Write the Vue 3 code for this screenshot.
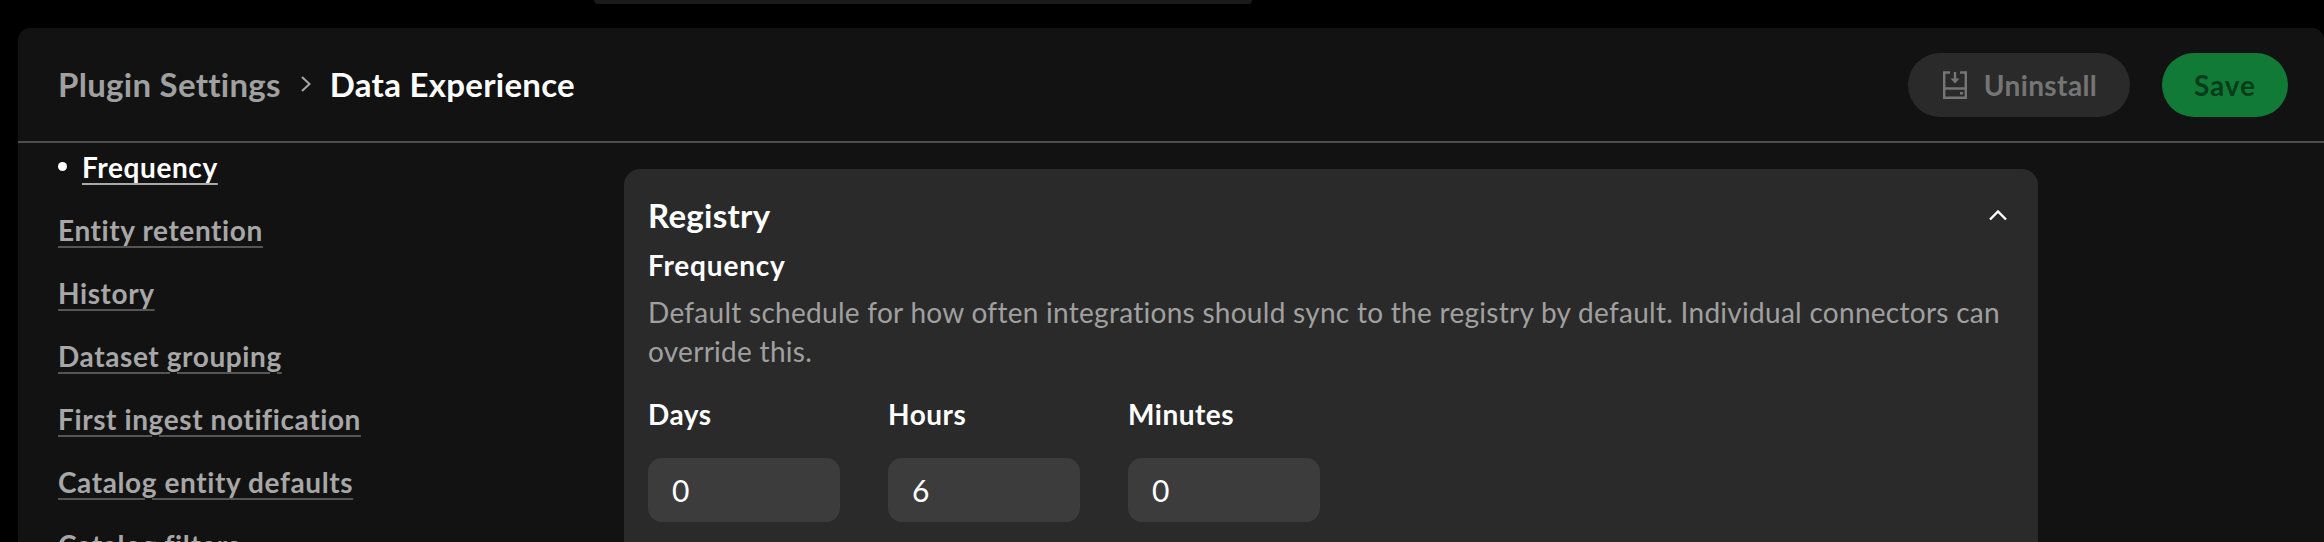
<script setup>
const navItems = [
  'Entity retention',
  'History',
  'Dataset grouping',
  'First ingest notification',
  'Catalog entity defaults',
  'Catalog filters'
]

const fields = [
  { label: 'Days', value: '0' },
  { label: 'Hours', value: '6' },
  { label: 'Minutes', value: '0' }
]
</script>

<template>
  <div class="page">
    <div class="top-strip">
      <div class="top-pill"></div>
    </div>

    <div class="panel">
      <header class="panel-head">
        <div class="crumbs">
          <span class="crumb-parent">Plugin Settings</span>
          <svg class="crumb-sep" width="14" height="20" viewBox="0 0 14 20" fill="none">
            <path d="M3 3l7.5 7L3 17" stroke="#a7a7a7" stroke-width="2" />
          </svg>
          <span class="crumb-current">Data Experience</span>
        </div>
        <div class="actions">
          <button class="btn btn-uninstall">
            <svg width="24" height="28" viewBox="0 0 24 28" fill="none" stroke="#757575" stroke-width="2.4">
              <path d="M7 1.5H1.2v25.3h21.6V1.5H17" />
              <path d="M1.2 17.5h21.6" />
              <path d="M12 1v9" />
              <path d="M7.5 7.5h9L12 12.5z" fill="#757575" stroke="none" />
              <path d="M17 22.2h3" />
            </svg>
            <span>Uninstall</span>
          </button>
          <button class="btn btn-save">Save</button>
        </div>
      </header>

      <div class="panel-body">
        <nav class="side-nav">
          <div class="nav-current">
            <span class="dot"></span>
            <a class="nav-link nav-link-active">Frequency</a>
          </div>
          <a v-for="item in navItems" :key="item" class="nav-link">{{ item }}</a>
        </nav>

        <section class="card">
          <div class="card-head">
            <h2>Registry</h2>
            <svg width="20" height="12" viewBox="0 0 20 12" fill="none">
              <path d="M2 10.5l8-8 8 8" stroke="#fff" stroke-width="2.4" />
            </svg>
          </div>
          <h3>Frequency</h3>
          <p class="desc">
            Default schedule for how often integrations should sync to the registry by default. Individual connectors can override this.
          </p>
          <div class="fields">
            <label v-for="field in fields" :key="field.label" class="field">
              <span class="field-label">{{ field.label }}</span>
              <span class="field-input">{{ field.value }}</span>
            </label>
          </div>
        </section>
      </div>
    </div>
  </div>
</template>

<style>
html,
body {
  margin: 0;
  background: #000;
  overflow: hidden;
}
</style>

<style scoped>
.page {
  height: 542px;
  overflow: hidden;
  background: #000;
  font-family: Lato, "Liberation Sans", sans-serif;
}
.top-strip {
  height: 28px;
  display: flex;
  padding-left: 594px;
}
.top-pill {
  width: 658px;
  height: 4px;
  background: #1b1b1b;
  border-radius: 0 0 16px 16px;
}
.panel {
  margin-left: 18px;
  height: 514px;
  background: #121212;
  border-radius: 12px 12px 0 0;
  overflow: hidden;
}
.panel-head {
  height: 113px;
  border-bottom: 2px solid #4d4d4d;
  display: flex;
  align-items: center;
  justify-content: space-between;
  padding: 0 36px 0 40px;
}
.crumbs {
  display: flex;
  align-items: center;
  padding-bottom: 2px;
  font-size: 33px;
  font-weight: 700;
  letter-spacing: 0.28px;
}
.crumb-parent {
  color: #a0a0a0;
}
.crumb-sep {
  margin: 0 17px 0 18px;
}
.crumb-current {
  color: #fff;
}
.actions {
  display: flex;
  gap: 32px;
  padding-top: 1px;
}
.btn {
  height: 64px;
  border: none;
  border-radius: 32px;
  font-family: inherit;
  font-size: 28px;
  font-weight: 700;
  letter-spacing: 0.4px;
  display: flex;
  align-items: center;
}
.btn-uninstall {
  width: 222px;
  justify-content: center;
  gap: 17px;
  padding: 0 0 0 2px;
  background: #2a2a2a;
  color: #757575;
}
.btn-save {
  width: 126px;
  justify-content: center;
  letter-spacing: 0.9px;
  background: #127a37;
  color: #083d1b;
}
.panel-body {
  display: flex;
}
.side-nav {
  width: 566px;
  padding: 6.5px 0 0 40px;
  display: flex;
  flex-direction: column;
  align-items: flex-start;
  gap: 29px;
}
.nav-current {
  display: flex;
  align-items: center;
  gap: 15px;
}
.dot {
  width: 9px;
  height: 9px;
  border-radius: 50%;
  background: #fff;
}
.nav-link {
  font-size: 28px;
  line-height: 34px;
  font-weight: 700;
  letter-spacing: 0.6px;
  color: #a7a7a7;
  text-decoration: underline;
  text-decoration-color: #555;
  text-decoration-thickness: 2px;
  text-underline-offset: 5px;
}
.nav-link-active {
  color: #fff;
  text-decoration-color: #aaa;
}
.card {
  width: 1366px;
  height: 500px;
  margin-top: 26px;
  padding: 28px 24px 0;
  background: #2a2a2a;
  border-radius: 16px 16px 0 0;
}
.card-head {
  display: flex;
  align-items: center;
  justify-content: space-between;
  padding-right: 6px;
}
h2 {
  margin: 0;
  font-size: 33px;
  line-height: 36px;
  font-weight: 700;
  letter-spacing: 0.3px;
  color: #fff;
}
h3 {
  margin: 15px 0 0;
  font-size: 28px;
  line-height: 34px;
  font-weight: 700;
  letter-spacing: 0.8px;
  color: #fff;
}
.desc {
  margin: 11px 0 0;
  font-size: 28px;
  line-height: 39px;
  letter-spacing: 0.28px;
  color: #a0a0a0;
}
.fields {
  display: flex;
  gap: 48px;
  margin-top: 26px;
}
.field {
  display: flex;
  flex-direction: column;
  gap: 27px;
}
.field-label {
  font-size: 28px;
  line-height: 34px;
  font-weight: 700;
  letter-spacing: 0.5px;
  color: #fff;
}
.field-input {
  width: 192px;
  height: 64px;
  box-sizing: border-box;
  padding: 0 24px;
  display: flex;
  align-items: center;
  background: #3c3c3c;
  border-radius: 14px;
  font-size: 30px;
  color: #fff;
}
</style>
